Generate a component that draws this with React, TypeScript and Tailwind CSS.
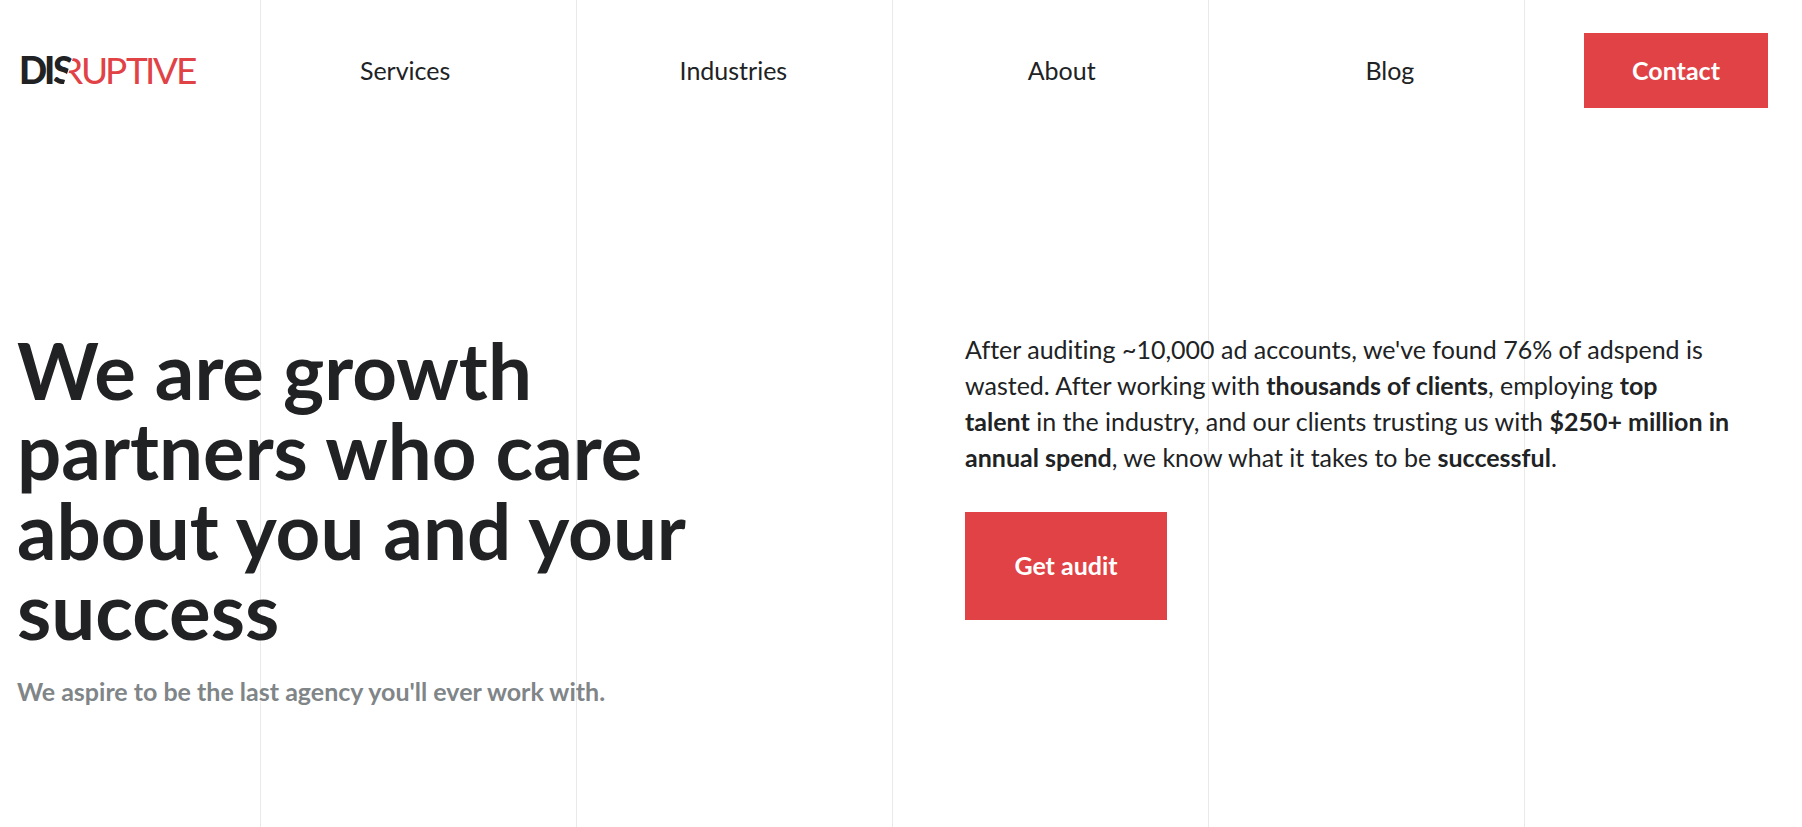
const navLinks = ['Services', 'Industries', 'About', 'Blog']

function Logo() {
  return (
    <svg
      viewBox="0 0 180 48"
      className="h-12 w-[180px] font-['Lato',sans-serif] text-[37px]"
      role="img"
      aria-label="Disruptive"
    >
      <defs>
        <clipPath id="s-half">
          <path d="M30 0H59L50 27L38 23L30 20ZM34 26L48 33L44 48H30Z" />
        </clipPath>
        <clipPath id="r-half">
          <path d="M59 0H80V48H52L51 28Z" />
        </clipPath>
      </defs>
      <g className="fill-[#202224] font-black">
        <text x="2 27" y="37">
          DI
        </text>
        <text x="36" y="37" clipPath="url(#s-half)">
          S
        </text>
      </g>
      <g className="fill-[#e14245]">
        <text x="43" y="37" clipPath="url(#r-half)">
          R
        </text>
        <text x="64 88 109 128 136 159" y="37">
          UPTIVE
        </text>
      </g>
    </svg>
  )
}

function GridLines() {
  return (
    <div className="pointer-events-none absolute inset-y-0 left-[260px] flex" aria-hidden="true">
      {[0, 1, 2, 3, 4].map((line) => (
        <div key={line} className="w-[316px] border-l border-[#e9e9ec]" />
      ))}
    </div>
  )
}

export default function App() {
  return (
    <div className="relative min-h-screen overflow-hidden bg-white font-['Lato',sans-serif] text-[25px] leading-9 text-[#202224] [font-variant-ligatures:none]">
      <GridLines />

      <div className="relative">
        <header className="flex items-center pt-[33px] pr-[34px] pl-[17px]">
          <a href="#" className="w-56 shrink-0">
            <Logo />
          </a>
          <nav className="grid flex-1 grid-cols-4 pb-0.5 text-center">
            {navLinks.map((label) => (
              <a key={label} href="#">
                {label}
              </a>
            ))}
          </nav>
          <button type="button" className="ml-[30px] h-[75px] w-[184px] bg-[#e14245] pb-0.5 font-bold text-white">
            Contact
          </button>
        </header>

        <main className="flex items-start pt-[222px] pl-[17px]">
          <section className="w-[948px] shrink-0">
            <h1 className="max-w-[720px] text-[78px] leading-[80px] font-bold">
              We are growth partners who care about you and your success
            </h1>
            <p className="mt-[23px] font-bold text-[#808588]">
              We aspire to be the last agency you'll ever work with.
            </p>
          </section>

          <section className="max-w-[800px] pt-px">
            <p>
              After auditing ~10,000 ad accounts, we've found 76% of adspend is
              <br />
              wasted. After working with <b>thousands of clients</b>, employing <b>top</b>
              <br />
              <b>talent</b> in the industry, and our clients trusting us with <b>$250+ million in</b>
              <br />
              <b>annual spend</b>, we know what it takes to be <b>successful</b>.
            </p>
            <button type="button" className="mt-[37px] h-[108px] w-[202px] bg-[#e14245] pb-0.5 font-bold text-white">
              Get audit
            </button>
          </section>
        </main>
      </div>
    </div>
  )
}
